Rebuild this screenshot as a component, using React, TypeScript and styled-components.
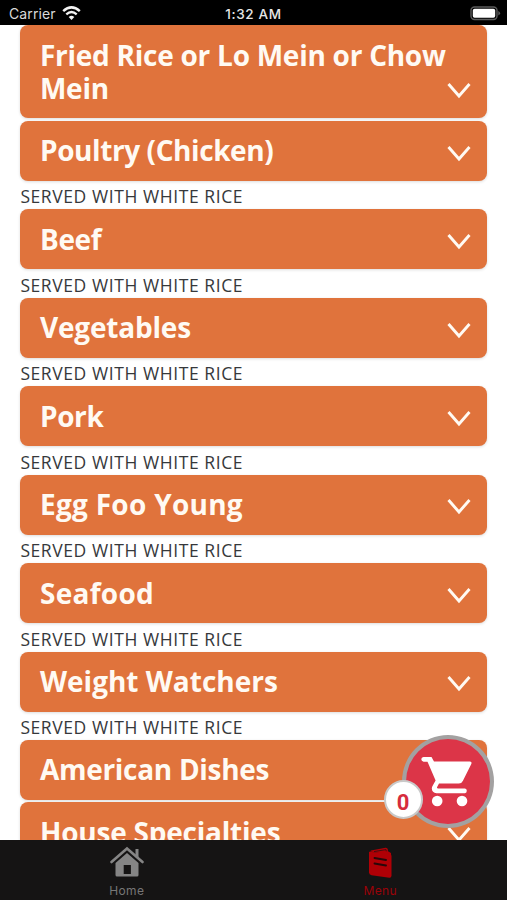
import React from "react";
import styled, { createGlobalStyle } from "styled-components";

const GlobalStyle = createGlobalStyle`
  * { box-sizing: border-box; }
  body { margin: 0; background: #fff; }
`;

const Screen = styled.div`
  position: relative;
  display: flex;
  flex-direction: column;
  width: 507px;
  height: 900px;
  overflow: hidden;
  background: #fff;
  font-family: "Open Sans", "Noto Sans", sans-serif;
`;

const StatusBar = styled.header`
  flex: none;
  display: grid;
  grid-template-columns: 1fr auto 1fr;
  align-items: center;
  height: 25px;
  padding: 2px 6px 0 9px;
  background: #000;
  color: #d9d9d9;
  font: 400 14px/20px Inter, sans-serif;
`;

const Carrier = styled.div`
  display: flex;
  align-items: center;
  gap: 6px;
  letter-spacing: 0.1px;
`;

const Clock = styled.div`
  margin-left: -3px;
  font-size: 13.5px;
  font-weight: 500;
  letter-spacing: 0.65px;
  color: #e6e6e6;
`;

const BatterySlot = styled.div`
  display: flex;
  justify-content: flex-end;
`;

const MenuList = styled.main`
  flex: 1;
  min-height: 0;
  overflow: hidden;
  padding: 0.4px 20px 0 20.4px;
`;

const Category = styled.button`
  display: flex;
  align-items: flex-end;
  justify-content: space-between;
  width: 100%;
  padding: 13.5px 16px 13.5px 19.6px;
  border: 0;
  border-radius: 8px;
  background: #e0733c;
  box-shadow: 0 1px 3px rgba(0, 0, 0, 0.14);
  color: #fffaf3;
  font-family: inherit;
  text-align: left;
`;

const Title = styled.span<{ $tracking: number }>`
  flex: 1;
  min-width: 0;
  font-size: 28px;
  font-weight: 700;
  line-height: 33px;
  letter-spacing: ${(p) => p.$tracking}px;
  white-space: pre;
`;

const Chevron = styled.svg`
  flex: none;
  display: block;
  width: 24px;
  height: 17px;
  margin-bottom: 5.7px;
`;

const Note = styled.p`
  height: 28.45px;
  margin: 0;
  padding-top: 4.6px;
  color: #36383b;
  font: 400 17.5px/22px "Open Sans", sans-serif;
  letter-spacing: 0.58px;
  white-space: nowrap;
`;

const Gap = styled.div`
  height: 2.5px;
`;

const TabBar = styled.nav`
  flex: none;
  display: grid;
  grid-template-columns: 1fr 1fr;
  height: 60px;
  background: #151414;
`;

const Tab = styled.div<{ $active?: boolean }>`
  display: flex;
  flex-direction: column;
  align-items: center;
  padding-top: 5px;
  gap: 5px;
  color: ${(p) => (p.$active ? "#b00006" : "#858585")};
`;

const TabLabel = styled.span<{ $active?: boolean }>`
  color: ${(p) => (p.$active ? "#9c0208" : "#777")};
  font: 400 12px/15px Inter, sans-serif;
  letter-spacing: 0.35px;
`;

const CartButton = styled.div`
  position: absolute;
  left: 402px;
  top: 735px;
  display: flex;
  align-items: center;
  justify-content: center;
  width: 92px;
  height: 93px;
  border: 4px solid #a3a1a1;
  border-radius: 50%;
  background: #dc3548;
`;

const CartCount = styled.div`
  position: absolute;
  left: 383.5px;
  top: 780px;
  display: flex;
  align-items: center;
  justify-content: center;
  width: 39px;
  height: 39px;
  border: 2px solid #c9c9c9;
  border-radius: 50%;
  background: #fff;
  color: #d62c3d;
  font: 700 22px/24px Roboto, sans-serif;
  padding-top: 6px;
`;

type Item = { title: string; tracking: number; note?: boolean };

const items: Item[] = [
  { title: "Fried Rice or Lo Mein or Chow\nMein", tracking: -0.26 },
  { title: "Poultry (Chicken)", tracking: -0.42, note: true },
  { title: "Beef", tracking: -0.4, note: true },
  { title: "Vegetables", tracking: -0.2, note: true },
  { title: "Pork", tracking: -0.4, note: true },
  { title: "Egg Foo Young", tracking: 0.28, note: true },
  { title: "Seafood", tracking: 0.28, note: true },
  { title: "Weight Watchers", tracking: 0, note: true },
  { title: "American Dishes", tracking: -0.3 },
  { title: "House Specialties", tracking: -0.22 },
];

const WifiIcon = () => (
  <svg width="19" height="15" viewBox="0 0 19 15" fill="none" stroke="#f2f2f2">
    <path d="M1.2 5.2 Q9.5-2.4 17.8 5.2" strokeWidth="2.5" />
    <path d="M4.3 8.4 Q9.5 3.7 14.7 8.4" strokeWidth="2.3" />
    <path d="M9.5 14 L6.7 11 Q9.5 8.7 12.3 11Z" fill="#f2f2f2" stroke="none" />
  </svg>
);

const BatteryIcon = () => (
  <svg width="31" height="15" viewBox="0 0 31 15">
    <rect x="1" y="1" width="26" height="12.5" rx="3.5" fill="#000" stroke="#5b5b5b" strokeWidth="1.4" />
    <rect x="2.8" y="2.8" width="22.4" height="9" rx="1.8" fill="#fff" />
    <path d="M28.3 5v4.6q1.8-.8 1.8-2.3T28.3 5Z" fill="#5b5b5b" />
  </svg>
);

const CartIcon = () => (
  <svg width="54" height="54" viewBox="0 0 54 54" fill="#fff">
    <path d="M2.5 2h8L13 6.500h36q2.200.2 1.300 2.500l-8.500 17q-1.200 2.500-4 2.500H18l-2 3.800q-.2 1.200 1.200 1.200H44q1.800.2 1.800 2.200T44 38.200H15.500q-4.500-.5-4.700-4.800 0-1.500 1-3l2.800-4.800L6.500 6.700h-4Q.3 6.300.3 4.300T2.500 2Z" />
    <circle cx="16.2" cy="46" r="5.3" />
    <circle cx="41" cy="46" r="5.3" />
  </svg>
);

const HomeIcon = () => (
  <svg width="34" height="33" viewBox="0 0 34 33">
    <path d="M1.500 17 17 3.500 32.500 17" fill="none" stroke="currentColor" strokeWidth="2.600" strokeLinecap="round" />
    <path d="M25.500 4h3v9l-3-2.600Z" fill="currentColor" />
    <path
      fillRule="evenodd"
      d="M17 8 28.500 18v12q0 1.500-1.500 1.500H7q-1.500 0-1.500-1.500V18ZM13.700 20v9h7.200v-9Z"
      fill="currentColor"
    />
  </svg>
);

const MenuIcon = () => (
  <svg width="28" height="33" viewBox="0 0 28 33">
    <path d="M5 5.500 19.500 2.700q2-.2 2.300 1.600l.2 2L25 8v2L4 6.500Z" fill="currentColor" />
    <path d="M8 6.600 20 4.600l.3 1.700" fill="none" stroke="#151414" strokeWidth=".7" />
    <path d="M3 6.700 23.500 8.500q2 .4 2 2.500v19.500q0 2.500-2.200 2.300L5.500 30.300Q3 29.800 3 27.500Z" fill="currentColor" />
    <path d="m8.500 13 11.500 2M8.500 18.500l11.500 2" stroke="#28080a" strokeWidth="1.900" strokeLinecap="round" />
  </svg>
);

export default function App() {
  return (
    <Screen>
      <GlobalStyle />
      <StatusBar>
        <Carrier>
          <span>Carrier</span>
          <WifiIcon />
        </Carrier>
        <Clock>1:32 AM</Clock>
        <BatterySlot>
          <BatteryIcon />
        </BatterySlot>
      </StatusBar>
      <MenuList>
        {items.map((item) => (
          <React.Fragment key={item.title}>
            <Category>
              <Title $tracking={item.tracking}>{item.title}</Title>
              <Chevron viewBox="0 0 24 17">
                <path d="m1.500 2 10.500 12L22.500 2" fill="none" stroke="#fffaf3" strokeWidth="2.900" />
              </Chevron>
            </Category>
            {item.note ? <Note>SERVED WITH WHITE RICE</Note> : <Gap />}
          </React.Fragment>
        ))}
      </MenuList>
      <TabBar>
        <Tab>
          <HomeIcon />
          <TabLabel>Home</TabLabel>
        </Tab>
        <Tab $active>
          <MenuIcon />
          <TabLabel $active>Menu</TabLabel>
        </Tab>
      </TabBar>
      <CartButton>
        <CartIcon />
      </CartButton>
      <CartCount>0</CartCount>
    </Screen>
  );
}
